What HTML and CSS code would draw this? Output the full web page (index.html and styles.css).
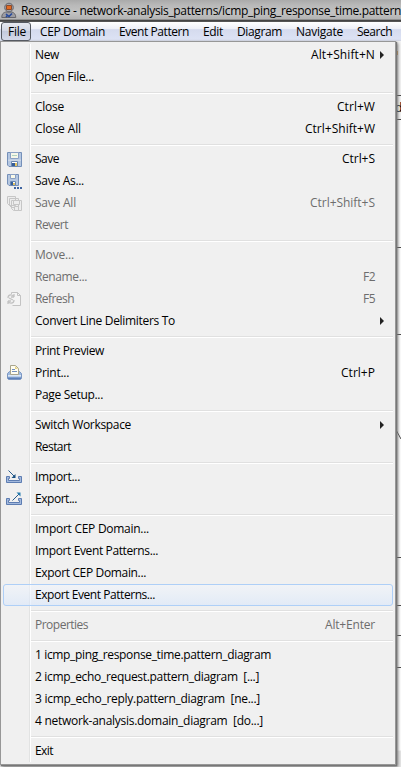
FILE: index.html
```
<!DOCTYPE html>
<html lang="en">
<head>
<meta charset="utf-8">
<title>Resource</title>
<link rel="stylesheet" href="styles.css">
</head>
<body>
<div class="window">
<header class="titlebar">
<svg class="app-icon" width="16" height="18" viewBox="0 0 16 18"><path d="M.8 15.500c0-4 2-5 4-5.500h6c2 .5 4 2 4 5.500z" fill="#9c9ca2" stroke="#67676c"/><circle cx="8" cy="5.500" r="4.300" fill="#a3a3a8" stroke="#65656c"/><path d="M5.500 3.500h5v4h-5z" fill="#e36b24" stroke="#8c4b2a"/><path d="M5 12l3 2.500 3-3M5 15l2-2" stroke="#25499c" stroke-width="1.600" fill="none"/></svg>
<span class="title" data-w="380">Resource - network-analysis_patterns/icmp_ping_response_time.pattern</span>
</header>
<nav class="menubar">
<span class="tab open"><span data-w="18">File</span></span>
<span data-w="65">CEP Domain</span><span data-w="70">Event Pattern</span><span data-w="20">Edit</span><span data-w="45">Diagram</span><span data-w="47">Navigate</span><span data-w="35">Search</span>
</nav>
<main class="workspace">
<svg class="canvas" width="6" height="726" viewBox="395 41 6 726"><path fill="#f4f4f4" d="M395 41h6v726h-6z"/><path fill="#fff" d="M395 120h6v630h-6z"/><path fill="#e6e6e6" d="M395 751h6v16h-6z"/><path stroke="#4a4a4a" d="M395 95.500h6M395 119.500h6M395 247.500h6M395 334.500h6M395 557.500h6M395 605.500h6M395 635.500h6M395 667.500h6M395 428l6 11"/><path fill="#e09b35" d="M397 51h1v4h-1z"/></svg>
<span class="peek">d</span>
<div class="menu">
<div class="row"><i></i><span data-w="24">New</span><kbd data-w="64">Alt+Shift+N</kbd><b></b></div>
<div class="row"><i></i><span data-w="59">Open File...</span></div>
<hr>
<div class="row"><i></i><span data-w="29">Close</span><kbd data-w="38">Ctrl+W</kbd></div>
<div class="row"><i></i><span data-w="46">Close All</span><kbd data-w="70">Ctrl+Shift+W</kbd></div>
<hr>
<div class="row"><i><svg width="16" height="16" viewBox="0 0 16 16"><path fill="#b4c7e2" stroke="#7590b9" d="M.5.500h14v14H2L.5 13z"/><path fill="#f6f7e9" stroke="#8aa1c4" d="M3.500.500h8v6h-8z"/><path stroke="#afd4bf" d="M5 3.500h5"/><path fill="#cbd7e7" d="M1 7.500h13v1.500H1z"/><path fill="#fff" stroke="#6a87b0" d="M4.500 9.500h6v5h-6z"/><path fill="#355d98" d="M5 11h3v3H5z"/><path fill="#e5c663" d="M8 11h2v3H8z"/></svg></i><span data-w="24">Save</span><kbd data-w="33">Ctrl+S</kbd></div>
<div class="row"><i><svg width="16" height="16" viewBox="0 0 16 16"><path fill="#b6c8e1" stroke="#7590b9" d="M.5.500h11v11H2L.5 10z"/><path fill="#fafae9" stroke="#8aa1c4" d="M3.500.500h5v4h-5z"/><path fill="#fff" stroke="#6a87b0" d="M3.500 7.500h5v4h-5z"/><path fill="#355d98" d="M4 8h2v3H4z"/><path fill="#e5c663" d="M6 9h2v2H6z"/><path fill="#3f64a0" d="M7 13h2v2H7zM10 13h2v2h-2zM13 13h2v2h-2z"/></svg></i><span data-w="49">Save As...</span></div>
<div class="row off"><i><svg width="16" height="16" viewBox="0 0 16 16"><g fill="#ededed" stroke="#c6c6c6"><path d="M.5.500h8v9h-6l-2-2zM2.500 2.500h9v9h-7l-2-2zM4.500 4.500h10v10h-8l-2-2z"/><path d="M6.500 4.500h6v4h-6zM7.500 10.500h4v4h-4z"/></g></svg></i><span data-w="41">Save All</span><kbd data-w="65">Ctrl+Shift+S</kbd></div>
<div class="row off"><i></i><span data-w="33">Revert</span></div>
<hr>
<div class="row off"><i></i><span data-w="39">Move...</span></div>
<div class="row off"><i></i><span data-w="52">Rename...</span><kbd data-w="12">F2</kbd></div>
<div class="row off"><i><svg width="16" height="16" viewBox="0 0 16 16"><g fill="none" stroke="#c3c3c3"><path fill="#f4f4f4" d="M4.500 2V.500h6l3 3v10h-8"/><path d="M10.500.500v3h3"/><path stroke-width="1.300" d="M1 6c0-4 5-4 6-1V2M7 5H4M7 8c0 4-5 4-6 1v3M1 9h3M2 6l4 2"/></g></svg></i><span data-w="39">Refresh</span><kbd data-w="12">F5</kbd></div>
<div class="row"><i></i><span data-w="140">Convert Line Delimiters To</span><b></b></div>
<hr>
<div class="row"><i></i><span data-w="69">Print Preview</span></div>
<div class="row"><i><svg width="16" height="16" viewBox="0 0 16 16"><path fill="#9db9df" stroke="#7c97c2" d="M2.500 5.500h10l2 2v5l-1 1h-12l-1-1v-5z"/><path fill="#fffdf0" stroke="#a9a58c" d="M3.500 8.500v-9h5l3 3v6z"/><path fill="#e6d389" d="M8 0l3 3H8z"/><path stroke="#7390bf" d="M5 3.500h3M5 5.500h5"/><path fill="#dbe7f5" d="M1 9h13v1.500H1z"/><path fill="#5d80b9" d="M1 11.500h13V13H1z"/></svg></i><span data-w="34">Print...</span><kbd data-w="34">Ctrl+P</kbd></div>
<div class="row"><i></i><span data-w="68">Page Setup...</span></div>
<hr>
<div class="row"><i></i><span data-w="96">Switch Workspace</span><b></b></div>
<div class="row"><i></i><span data-w="36">Restart</span></div>
<hr>
<div class="row"><i><svg width="16" height="16" viewBox="0 0 16 16"><path fill="#a3b9dd" stroke="#5d7db2" d="M-.5 6.500h3v2h-1v2h11v-2h-1v-2h3v6h-15z"/><path fill="none" stroke="#285c8d" d="M1.500.500l6 6"/><path fill="#174f82" d="M8.500 4v4h-4z"/></svg></i><span data-w="45">Import...</span></div>
<div class="row"><i><svg width="16" height="16" viewBox="0 0 16 16"><path fill="#a3b9dd" stroke="#5d7db2" d="M-.5 6.500h3v2h-1v2h11v-2h-1v-2h3v6h-15z"/><path fill="none" stroke="#285c8d" d="M5.500 8.500l7-7"/><path fill="#267caf" d="M9.500.500h4v4z"/></svg></i><span data-w="42">Export...</span></div>
<hr>
<div class="row"><i></i><span data-w="114">Import CEP Domain...</span></div>
<div class="row"><i></i><span data-w="123">Import Event Patterns...</span></div>
<div class="row"><i></i><span data-w="111">Export CEP Domain...</span></div>
<div class="row hot"><i></i><span data-w="120">Export Event Patterns...</span></div>
<hr>
<div class="row off"><i></i><span data-w="53">Properties</span><kbd data-w="50">Alt+Enter</kbd></div>
<hr>
<div class="row"><i></i><span data-w="236">1 icmp_ping_response_time.pattern_diagram</span></div>
<div class="row"><i></i><span data-w="224">2 icmp_echo_request.pattern_diagram&nbsp; [...]</span></div>
<div class="row"><i></i><span data-w="225">3 icmp_echo_reply.pattern_diagram&nbsp; [ne...]</span></div>
<div class="row"><i></i><span data-w="228">4 network-analysis.domain_diagram&nbsp; [do...]</span></div>
<hr>
<div class="row"><i></i><span data-w="18">Exit</span></div>
</div>
</main>
</div>
<script src="fit.js"></script>
</body>
</html>
```
FILE: styles.css
```
* { box-sizing: border-box; }
body {
  margin: 0;
  font: 12px/22px "Open Sans", "Noto Sans", sans-serif;
  color: #000;
  background: #f0f0f0;
}
.window { width: 401px; height: 767px; overflow: hidden; white-space: nowrap; }
.titlebar {
  display: flex;
  height: 22px;
  padding-left: 1px;
  gap: 4px;
  background: linear-gradient(#aaa, #b9b9b9 25%, #c3c3c3 60%, #b4b4b4 88%, #d5d5d5 90%, #444 96%);
  border-bottom: 1px solid #555;
}
.app-icon { flex: none; margin-top: 2px; }
.title { flex: none; }
.menubar {
  display: flex;
  height: 19px;
  gap: 14px;
  line-height: 20px;
  padding-left: 1px;
  background: linear-gradient(#fff, #eef0f8 35%, #d5dbee 40%, #dce2f4 90%, #d0d4e0);
}
.menubar > span { flex: none; }
.tab {
  width: 30px;
  height: 19px;
  margin-right: -5px;
  padding-left: 6px;
  line-height: 18px;
  border: 1px solid #555961;
  border-radius: 3px;
  background: linear-gradient(#e5e8ef, #d2d7e5 45%, #c3cadd 50%, #d5daea);
}
.workspace { position: relative; height: 726px; background: #e4e4e4; }
.canvas { position: absolute; top: 0; left: 395px; }
.peek { position: absolute; left: 395px; top: 56px; }
.menu {
  position: relative;
  width: 396px;
  height: 724px;
  padding: 2px;
  border: 1px solid #979797;
  background: linear-gradient(90deg, transparent 28px, #e2e3e3 28px 29px, #fff 29px 30px, transparent 30px) 0 2px / 100% 718px no-repeat, #f0f0f0;
  box-shadow: 1px 1px 1px #777, 2px 2px 3px #777;
}
.row {
  display: flex;
  align-items: center;
  height: 22px;
  padding-right: 18px;
  position: relative;
}
.row > i { flex: none; width: 32px; padding-left: 4px; height: 16px; margin-top: 2px; }
.row svg { display: block; overflow: visible; }
.row > span { flex: none; }
kbd { font: inherit; margin-left: auto; }
b {
  position: absolute;
  left: 377px;
  top: 7px;
  border-left: 4px solid #222;
  border-top: 4px solid transparent;
  border-bottom: 4px solid transparent;
}
hr {
  height: 2px;
  margin: 4px 0 2px 28px;
  border: 0;
  border-top: 1px solid #e0e0e0;
  background: #fff;
}
.off { color: #6d6d6d; }
.hot::before {
  content: "";
  position: absolute;
  inset: 0;
  border: 1px solid #aecff7;
  border-radius: 3px;
  background: linear-gradient(rgba(242, 246, 252, .55), rgba(215, 230, 252, .55));
}
.hot > span { position: relative; }
```
FILE: fit.js
```
// Spreads letter spacing so each label fills its column width.
document.querySelectorAll("[data-w]").forEach(function (el) {
  var width = Number(el.dataset.w);
  el.style.display = "block";
  el.style.width = "max-content";
  var gap = (width - el.getBoundingClientRect().width) / el.textContent.length;
  el.style.letterSpacing = gap + "px";
  el.style.width = width + "px";
});
```
